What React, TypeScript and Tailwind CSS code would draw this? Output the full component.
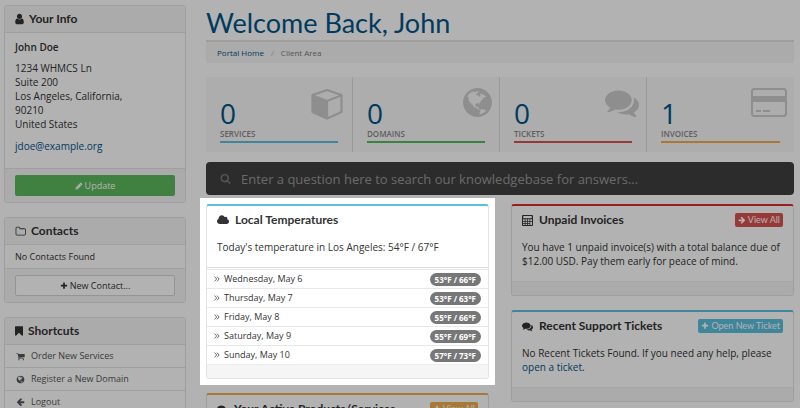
import type { ReactNode } from 'react';

const icons = {
  user: 'M1280 1399q0 109-62.5 187t-150.5 78h-854q-88 0-150.5-78t-62.5-187q0-85 8.5-160.5t31.5-152 58.5-131 94-89 134.5-34.5q131 128 313 128t313-128q76 0 134.5 34.5t94 89 58.5 131 31.5 152 8.5 160.5zm-256-887q0 159-112.5 271.5t-271.5 112.5-271.5-112.5-112.5-271.5 112.5-271.5 271.5-112.5 271.5 112.5 112.5 271.5z',
  folder: 'M1600 1312v-704q0-40-28-68t-68-28h-704q-40 0-68-28t-28-68v-64q0-40-28-68t-68-28h-320q-40 0-68 28t-28 68v960q0 40 28 68t68 28h1216q40 0 68-28t28-68zm128-704v704q0 92-66 158t-158 66h-1216q-92 0-158-66t-66-158v-960q0-92 66-158t158-66h320q92 0 158 66t66 158v32h672q92 0 158 66t66 158z',
  bookmark: 'M1164 128q23 0 44 9 33 13 52.5 41t19.5 62v1289q0 34-19.5 62t-52.5 41q-19 8-44 8-48 0-83-32l-441-424-441 424q-36 33-83 33-23 0-44-9-33-13-52.5-41t-19.5-62v-1289q0-34 19.5-62t52.5-41q21-9 44-9h1048z',
  cart: 'M704 1536q0 52-38 90t-90 38-90-38-38-90 38-90 90-38 90 38 38 90zm896 0q0 52-38 90t-90 38-90-38-38-90 38-90 90-38 90 38 38 90zm128-1088v512q0 24-16.5 42.5t-40.5 21.5l-1044 122q13 60 13 70 0 16-24 64h920q26 0 45 19t19 45-19 45-45 19h-1024q-26 0-45-19t-19-45q0-11 8-31.5t16-36 21.5-40 15.5-29.5l-177-823h-204q-26 0-45-19t-19-45 19-45 45-19h256q16 0 28.5 6.5t19.5 15.5 13 24.5 8 26 5.5 29.5 4.5 26h1201q26 0 45 19t19 45z',
  cloud: 'M1984 1152q0 159-112.5 271.5t-271.5 112.5h-1088q-185 0-316.5-131.5t-131.5-316.5q0-132 71-241.5t187-163.5q-2-28-2-43 0-212 150-362t362-150q158 0 286.5 88t187.5 230q70-62 166-62 106 0 181 75t75 181q0 75-41 138 129 30 213 134.5t84 239.5z',
  arrow: 'M1600 960q0 54-37 91l-651 651q-39 37-91 37-51 0-90-37l-75-75q-38-38-38-91t38-91l293-293h-704q-52 0-84.5-37.5t-32.5-90.5v-128q0-53 32.5-90.5t84.5-37.5h704l-293-294q-38-36-38-90t38-90l75-75q38-38 90-38 53 0 91 38l651 651q37 35 37 90z',
  plus: 'M1600 736v192q0 40-28 68t-68 28h-416v416q0 40-28 68t-68 28h-192q-40 0-68-28t-28-68v-416h-416q-40 0-68-28t-28-68v-192q0-40 28-68t68-28h416v-416q0-40 28-68t68-28h192q40 0 68 28t28 68v416h416q40 0 68 28t28 68z',
  search: 'M1216 832q0-185-131.5-316.5t-316.5-131.5-316.5 131.5-131.5 316.5 131.5 316.5 316.5 131.5 316.5-131.5 131.5-316.5zm512 832q0 52-38 90t-90 38q-54 0-90-38l-343-342q-179 124-399 124-143 0-273.5-55.5t-225-150-150-225-55.5-273.5 55.5-273.5 150-225 225-150 273.5-55.5 273.5 55.5 225 150 150 225 55.5 273.5q0 220-124 399l343 343q37 37 37 90z',
  pencil: 'M491 1536l91-91-235-235-91 91v107h128v128h107zm523-928q0-22-22-22-10 0-17 7l-542 542q-7 7-7 17 0 22 22 22 10 0 17-7l542-542q7-7 7-17zm-54-192l416 416-832 832h-416v-416zm683 96q0 53-37 90l-166 166-416-416 166-165q36-38 90-38 53 0 91 38l235 234q37 39 37 91z',
  comments: 'M1408 768q0 139-94 257t-256.5 186.5-353.5 68.5q-86 0-176-16-124 88-278 128-36 9-86 16h-3q-11 0-20.5-8t-11.5-21q-1-3-1-6.5t.5-6.5 2-6l2.5-5 3.5-5.5 4-5 4.5-5 4-4.5q5-6 23-25t26-29.5 22.5-29 25-38.5 20.5-44q-124-72-195-177t-71-224q0-139 94-257t256.5-186.5 353.5-68.5 353.5 68.5 256.5 186.5 94 257zm384 256q0 120-71 224.5t-195 176.5q10 24 20.5 44t25 38.5 22.5 29 26 29.5 23 25q1 1 4 4.5t4.5 5 4 5 3.5 5.5l2.5 5 2 6 .5 6.5-1 6.5q-3 14-13 22t-22 7q-50-7-86-16-154-40-278-128-90 16-176 16-271 0-472-132 58 4 88 4 161 0 309-45t264-129q125-92 192-212t67-254q0-77-23-152 129 71 204 178t75 230z',
  globe: 'M896 128q209 0 385.5 103t279.5 279.5 103 385.5-103 385.5-279.5 279.5-385.5 103-385.5-103-279.5-279.5-103-385.5 103-385.5 279.5-279.5 385.5-103zm274 521q-2 1-9.5 9.5t-13.5 9.5q2 0 4.5-5t5-11 3.5-7q6-7 22-15 14-6 52-12 34-8 51 11-2-2 9.5-13t14.5-12q3-2 15-4.5t15-7.5l2-22q-12 1-17.5-7t-6.5-21q0 2-6 8 0-7-4.5-8t-11.5 1-9 1q-10-3-15-7.5t-8-16.5-4-15q-2-5-9.5-11t-9.5-10q-1-2-2.5-5.5t-3-6.5-4-5.5-5.5-2.5-7 5-7.5 10-4.5 5q-3-2-6-1.5t-4.5 1-4.5 3-5 3.5q-3 2-8.5 3t-8.5 2q15-5-1-11-10-4-16-3 9-4 7.5-12t-8.5-14h5q-1-4-8.5-8.5t-17.5-8.5-13-6q-8-5-34-9.5t-33-.5q-5 6-4.5 10.5t4 14 3.5 12.5q1 6-5.5 13t-6.5 12q0 7 14 15.5t10 21.5q-3 8-16 16t-16 12q-5 8-1.5 18.5t10.5 16.5q2 2 1.5 4t-3.5 4.5-5.5 4-6.5 3.5l-3 2q-11 5-20.5-6t-13.5-26q-7-25-16-30-23-8-29 1-5-13-41-26-25-9-58-4 6-1 0-15-7-15-19-12 3-6 4-17.5t1-13.5q3-13 12-23 1-1 7-8.5t9.5-13.5.5-6q35 4 50-11 5-5 11.5-17t10.5-17q9-6 14-5.5t14.5 5.5 14.5 5q14 1 15.5-11t-7.5-20q12 1 3-17-4-7-8-9-12-4-27 5-8 4 2 8-1-1-9.5 10.5t-16.5 17.5-16-5q-1-1-5.5-13.5t-9.5-13.5q-8 0-16 15 3-8-11-15t-24-8q19-12-8-27-7-4-20.5-5t-19.5 4q-5 7-5.5 11.5t5 8 10.5 5.5 11.5 4 8.5 3q14 10 8 14-2 1-8.5 3.5t-11.5 4.5-6 4q-3 4 0 14t-2 14q-5-5-9-17.5t-7-16.5q7 9-25 6l-10-1q-4 0-16 2t-20.5 1-13.5-8q-4-8 0-20 1-4 4-2-4-3-11-9.5t-10-8.5q-46 15-94 41 6 1 12-1 5-2 13-6.5t10-5.5q34-14 42-7l5-5q14 16 20 25-7-4-30-1-20 6-22 12 7 12 5 18-4-3-11.5-10t-14.5-11-15-5q-16 0-22 1-146 80-235 222 7 7 12 8 4 1 5 9t2.5 11 11.5-3q9 8 3 19 1-1 44 27 19 17 21 21 3 11-10 18-1-2-9-9t-9-4q-3 5 .5 18.5t10.5 12.5q-7 0-9.5 16t-2.5 35.5-1 23.5l2 1q-3 12 5.5 34.5t21.5 19.5q-13 3 20 43 6 8 8 9 3 2 12 7.5t15 10 10 10.5q4 5 10 22.5t14 23.5q-2 6 9.5 20t10.5 23q-1 0-2.5 1t-2.5 1q3 7 15.500 14t15.500 13q1 3 2 10t3 11 8 2q2-20-24-62-15-25-17-29-3-5-5.500-15.500t-4.500-14.500q2 0 6 1.500t8.500 3.500 7.500 4 2 3q-3 7 2 17.500t12 18.500 17 19 12 13q6 6 14 19.500t0 13.500q9 0 20 10.500t17 19.500q5 8 8 26t5 24q2 7 8.500 13.500t12.500 9.500l16 8 13 7q5 2 18.500 10.500t21.500 11.500q10 4 16 4t14.500-2.500 13.500-3.500q15-2 29 15t21 21q36 19 55 11-2 1 .5 7.500t8 15.500 9 14.500 5.500 8.500q5 6 18 15t18 15q6-4 7-9-3 8 7 20t18 10q14-3 14-32-31 15-49-18 0-1-2.500-5.500t-4-8.500-2.500-8.500 0-7.500 5-3q9 0 10-3.500t-2-12.500-4-13q-1-8-11-20t-12-15q-5 9-16 8t-16-9q0 1-1.500 5.500t-1.500 6.500q-13 0-15-1 1-3 2.500-17.500t3.500-22.500q1-4 5.500-12t7.500-14.500 4-12.500-4.500-9.500-17.500-2.500q-19 1-26 20-1 3-3 10.500t-5 11.500-9 7q-7 3-24 2t-24-5q-13-8-22.500-29t-9.500-37q0-10 2.500-26.500t3-25-5.500-24.500q3-2 9-9.500t10-10.500q2-1 4.500-1.500t4.500 0 4-1.500 3-6q-1-1-4-3-3-3-4-3 7 3 28.500-1.500t27.500 1.500q15 11 22-2 0-1-2.500-9.500t-.5-13.500q5 27 29 9 3 3 15.500 5t17.500 5q3 2 7 5.500t5.500 4.500 5-.5 8.500-6.500q10 14 12 24 11 40 19 44 7 3 11 2t4.500-9.500 0-14-1.500-12.500l-1-8v-18l-1-8q-15-3-18.500-12t1.500-18.500 15-18.500q1-1 8-3.500t15.500-6.500 12.500-8q21-19 15-35 7 0 11-9-1 0-5-3t-7.500-5-4.500-2q9-5 2-16 5-3 7.500-11t7.500-10q9 12 21 2 7-8 1-16 5-7 20.500-10.500t18.500-9.500q7 2 8-2t1-12 3-12q4-5 15-9t13-5l17-11q3-4 0-4 18 2 31-11 10-11-6-20 3-6-3-9.500t-15-5.500q3-1 11.500-.5t10.500-1.500q15-10-7-16-17-5-43 12zm-163 877q206-36 351-189-3-3-12.500-4.500t-12.500-3.500q-18-7-24-8 1-7-2.500-13t-8-9-12.500-8-11-7q-2-2-7-6t-7-5.500-7.500-4.500-8.500-2-10 1l-3 1q-3 1-5.500 2.500t-5.500 3-4 3 0 2.500q-21-17-36-22-5-1-11-5.500t-10.500-7-10-1.500-11.500 7q-5 5-6 15t-2 13q-7-5 0-17.500t2-18.500q-3-6-10.500-4.500t-12 4.500-11.500 8.500-9 6.500-8.500 5.500-8.500 7.500q-3 4-6 12t-5 11q-2-4-11.500-6.500t-9.500-5.500q2 10 4 35t5 38q7 31-12 48-27 25-29 40-4 22 12 26 0 7-8 20.500t-7 21.500q0 6 2 16z',
};

interface IconProps {
  name: keyof typeof icons;
  box?: string;
  className?: string;
}

function Icon({ name, box = '0 0 1792 1792', className = 'size-[11px]' }: IconProps) {
  return (
    <svg viewBox={box} fill="currentColor" aria-hidden="true" className={`shrink-0 ${className}`}>
      <path d={icons[name]} />
    </svg>
  );
}

function CubeIcon() {
  return (
    <svg viewBox="0 0 32 32" aria-hidden="true" className="h-8 w-9" fill="none" stroke="currentColor" strokeWidth="2.2" strokeLinejoin="round">
      <path d="M16 2 30.5 7v17L16 30.5 1.5 24V7z" />
      <path d="M2 7.500 16 13v17L2 24z" fill="currentColor" />
      <path d="M16 13 30 7.500" />
    </svg>
  );
}

function CardIcon() {
  return (
    <svg viewBox="0 0 36 30" aria-hidden="true" className="h-[30px] w-9" fill="currentColor">
      <rect x="1" y="1" width="34" height="27" rx="2.5" fill="none" stroke="currentColor" strokeWidth="2" />
      <path d="M1 8h34v6H1zM5 22h5v2H5zM12 22h7v2h-7z" />
    </svg>
  );
}

function CalculatorIcon() {
  return (
    <svg viewBox="0 0 22 22" aria-hidden="true" className="size-[11px] shrink-0">
      <path fill="currentColor" fillRule="evenodd" d="M2 0h18a2 2 0 0 1 2 2v18a2 2 0 0 1-2 2H2a2 2 0 0 1-2-2V2a2 2 0 0 1 2-2zM2.500 2v4.500h17V2zM2 8.500V12h3.500V8.500zm5 0V12h3.500V8.500zm5 0V12h3V8.500zm4.500 0V12H20V8.500zM2 13.500V16h3.500v-2.500zm5 0V16h3.500v-2.500zm5 0V16h3v-2.500zM2 17.500V20h3.500v-2.500zm5 0V20h3.500v-2.500zm5 0V20h3v-2.500zm4.500-4V20H20v-6.500z" />
    </svg>
  );
}

const stats = [
  { label: 'Services', value: 0, line: 'bg-[#5bc0de]', icon: <CubeIcon /> },
  { label: 'Domains', value: 0, line: 'bg-[#5cb85c]', icon: <Icon name="globe" box="128 128 1536 1536" className="size-[29px]" /> },
  { label: 'Tickets', value: 0, line: 'bg-[#d9534f]', icon: <Icon name="comments" box="0 128 1792 1536" className="h-[29px] w-[34px]" /> },
  { label: 'Invoices', value: 1, line: 'bg-[#f0ad4e]', icon: <CardIcon /> },
];

const temperatures = [
  { day: 'Wednesday, May 6', range: '53°F / 66°F' },
  { day: 'Thursday, May 7', range: '53°F / 63°F' },
  { day: 'Friday, May 8', range: '55°F / 66°F' },
  { day: 'Saturday, May 9', range: '55°F / 69°F' },
  { day: 'Sunday, May 10', range: '57°F / 73°F' },
];

const shortcuts = [
  { label: 'Order New Services', icon: <Icon name="cart" className="size-[9px]" /> },
  { label: 'Register a New Domain', icon: <Icon name="globe" className="size-[9px]" /> },
  { label: 'Logout', icon: <Icon name="arrow" className="size-[9px] rotate-180" /> },
];

function SidePanel({ icon, title, children }: { icon: ReactNode; title: string; children: ReactNode }) {
  return (
    <section className="overflow-hidden rounded-[3px] border border-[#e3e3e3] bg-white">
      <h2 className="flex h-[27px] items-center gap-[5px] border-b border-[#e3e3e3] bg-[#f5f5f5] px-[10px] font-[Lato] text-[12px] font-bold">
        {icon}
        {title}
      </h2>
      {children}
    </section>
  );
}

interface HomePanelProps {
  accent: string;
  icon: ReactNode;
  title: string;
  action?: ReactNode;
  children?: ReactNode;
}

function HomePanel({ accent, icon, title, action, children }: HomePanelProps) {
  return (
    <section className={`rounded-[3px] border border-t-2 border-[#e3e3e3] bg-white ${accent}`}>
      <div className="flex h-[28px] items-center justify-between px-[10px]">
        <h2 className="flex items-center gap-[6px] font-[Lato] text-[12px] font-bold">
          {icon}
          {title}
        </h2>
        {action}
      </div>
      {children}
      <div className="h-[14px] rounded-b-[2px] border-t border-[#eee] bg-[#f5f5f5]" />
    </section>
  );
}

function PanelButton({ color, icon, children }: { color: string; icon: ReactNode; children: ReactNode }) {
  return (
    <button type="button" className={`flex h-[14px] items-center gap-[2px] rounded-[2px] px-[3px] font-[Lato] text-[9px] text-white ${color}`}>
      {icon}
      {children}
    </button>
  );
}

export default function App() {
  return (
    <div className="flex h-screen items-start gap-[20px] overflow-hidden bg-white pr-[6px] pl-[4px] font-['Open_Sans',sans-serif] text-[10px] leading-[14px] text-[#333]">
      <aside className="mt-[5px] flex w-[182px] shrink-0 flex-col gap-[14px]">
        <SidePanel icon={<Icon name="user" box="0 0 1280 1792" className="h-3 w-[9px]" />} title="Your Info">
          <div className="px-[10px] pt-[7px] pb-[15px]">
            <p className="mb-[7px] font-semibold">John Doe</p>
            <address className="mb-[8px] not-italic">
              1234 WHMCS Ln<br />
              Suite 200<br />
              Los Angeles, California,<br />
              90210<br />
              United States
            </address>
            <a href="#email" className="text-[#058]">jdoe@example.org</a>
          </div>
          <div className="border-t border-[#e3e3e3] bg-[#f5f5f5] px-[10px] py-[6px]">
            <button type="button" className="flex h-[21px] w-full items-center justify-center gap-[2px] rounded-[2px] bg-[#5cb85c] text-[9px] text-white">
              <Icon name="pencil" className="size-2" />
              Update
            </button>
          </div>
        </SidePanel>

        <SidePanel icon={<Icon name="folder" box="0 0 1728 1792" />} title="Contacts">
          <p className="flex h-[23px] items-center px-[10px] text-[9px]">No Contacts Found</p>
          <div className="border-t border-[#e3e3e3] bg-[#f5f5f5] px-[10px] py-[6px]">
            <button type="button" className="flex h-[21px] w-full items-center justify-center gap-[2px] rounded-[2px] border border-[#d5d5d5] bg-white text-[9px]">
              <Icon name="plus" className="size-2" />
              New Contact...
            </button>
          </div>
        </SidePanel>

        <SidePanel icon={<Icon name="bookmark" box="0 0 1280 1792" className="h-3 w-2" />} title="Shortcuts">
          <nav>
            {shortcuts.map((item) => (
              <a key={item.label} href="#shortcut" className="flex h-[23px] items-center gap-[6px] border-b border-[#e3e3e3] px-[11px] text-[9px] text-[#555]">
                {item.icon}
                {item.label}
              </a>
            ))}
          </nav>
        </SidePanel>
      </aside>

      <main className="min-w-0 flex-1">
        <h1 className="mt-[5px] h-[35px] font-[Lato] text-[27px] leading-[35px] text-[#058]">Welcome Back, John</h1>
        <nav className="flex h-[23px] items-center gap-[7px] border-t-2 border-[#e3e3e3] bg-[#f5f5f5] px-[11px] text-[8px]">
          <a href="#home" className="font-medium text-[#058]">Portal Home</a>
          <span className="text-[#bbb]">/</span>
          <span className="text-[#777]">Client Area</span>
        </nav>

        {/* Account totals */}
        <div className="mt-[14px] grid h-[75px] grid-cols-4 bg-[#f8f8f8]">
          {stats.map((stat) => (
            <a key={stat.label} href="#stat" className="relative border-r border-[#ddd] px-[14px] pt-[20px] last:border-r-0">
              <div className="absolute top-[11px] right-[7px] text-[#ccc]">{stat.icon}</div>
              <div className="text-[28px] leading-[32px] text-[#058]">{stat.value}</div>
              <div className="pb-[2px] text-[8px] leading-[10px] font-semibold text-[#888] uppercase">{stat.label}</div>
              <div className={`h-[2px] ${stat.line}`} />
            </a>
          ))}
        </div>

        <label className="mt-[10px] flex h-[33px] items-center gap-[10px] rounded-[4px] bg-[#404040] px-[14px] text-[#777]">
          <Icon name="search" />
          <input
            type="text"
            aria-label="Search the knowledgebase"
            placeholder="Enter a question here to search our knowledgebase for answers..."
            className="h-5 min-w-0 flex-1 bg-transparent text-[13px] outline-none placeholder:text-[#999]"
          />
        </label>

        <div className="mt-[9px] grid grid-cols-2 items-start gap-[22px]">
          <div className="flex flex-col gap-[14px]">
            {/* Spotlight: everything outside this panel is dimmed */}
            <div className="relative">
              <HomePanel accent="border-t-[#5bc0de]" icon={<Icon name="cloud" box="64 0 1920 1792" className="h-3 w-3" />} title="Local Temperatures">
                <p className="px-[10px] pt-[6px] pb-[13px]">Today's temperature in Los Angeles: 54°F / 67°F</p>
                <ul className="border-t border-[#ddd] pt-px">
                  {temperatures.map((item) => (
                    <li key={item.day} className="flex h-[19px] items-center border-t border-[#e8e8e8] px-[7px] text-[9px]">
                      <svg viewBox="0 0 10 10" aria-hidden="true" className="mr-[4px] size-[6px]" fill="none" stroke="#555" strokeWidth="1.400">
                        <path d="M1 1 4.500 5 1 9M5 1 8.500 5 5 9" />
                      </svg>
                      <span className="flex-1">{item.day}</span>
                      <span className="rounded-full bg-[#777] px-[5px] text-[8px] leading-[13px] font-bold text-white">{item.range}</span>
                    </li>
                  ))}
                </ul>
              </HomePanel>
              <div className="pointer-events-none absolute -inset-x-[6px] -inset-y-[6px] shadow-[0_0_0_999px_rgba(0,0,0,0.3)]" />
            </div>

            <HomePanel
              accent="border-t-[#f0ad4e]"
              icon={<Icon name="comments" />}
              title="Your Active Products/Services"
              action={<PanelButton color="bg-[#f0ad4e]" icon={<Icon name="plus" className="size-2" />}>View All</PanelButton>}
            />
          </div>

          <div className="flex flex-col gap-[14px]">
            <HomePanel
              accent="border-t-[#d9302c]"
              icon={<CalculatorIcon />}
              title="Unpaid Invoices"
              action={<PanelButton color="bg-[#d9534f]" icon={<Icon name="arrow" className="size-2" />}>View All</PanelButton>}
            >
              <p className="px-[10px] pt-[6px] pb-[13px]">
                You have 1 unpaid invoice(s) with a total balance due of $12.00 USD. Pay them early for peace of mind.
              </p>
            </HomePanel>
            <HomePanel
              accent="border-t-[#5bc0de]"
              icon={<Icon name="comments" />}
              title="Recent Support Tickets"
              action={<PanelButton color="bg-[#5bc0de]" icon={<Icon name="plus" className="size-2" />}>Open New Ticket</PanelButton>}
            >
              <p className="px-[10px] pt-[6px] pb-[13px]">
                No Recent Tickets Found. If you need any help, please <a href="#ticket" className="text-[#058]">open a ticket</a>.
              </p>
            </HomePanel>
          </div>
        </div>
      </main>
    </div>
  );
}
